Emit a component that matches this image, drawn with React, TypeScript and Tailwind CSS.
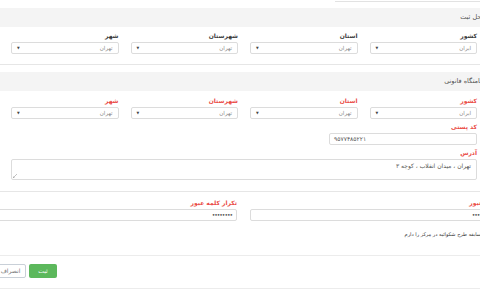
import React from 'react';

const font = { fontFamily: '"DejaVu Sans", Tahoma, sans-serif' };

function Label({ text, red }: { text: string; red?: boolean }) {
  return (
    <div
      className={`text-[6px] leading-[8px] font-bold mb-[2px] whitespace-nowrap ${
        red ? 'text-[#ea4a44]' : 'text-[#3a3a3a]'
      }`}
    >
      {text}
    </div>
  );
}

function SelectBox({ value }: { value: string }) {
  return (
    <div className="h-[12px] flex items-center justify-between border border-[#dcdcdc] rounded-[2px] bg-white px-[5px]">
      <span className="text-[5.5px] leading-[8px] text-[#888]">{value}</span>
      <span className="text-[3.5px] leading-[8px] text-[#444]">▼</span>
    </div>
  );
}

function Field({ label, value, red }: { label: string; value: string; red?: boolean }) {
  return (
    <div>
      <Label text={label} red={red} />
      <SelectBox value={value} />
    </div>
  );
}

function Header({ title }: { title: string }) {
  return (
    <div className="h-[19px] bg-[#f4f4f4] flex items-center pr-[5px]">
      <span className="text-[6.5px] leading-[9px] text-[#555] whitespace-nowrap">{title}</span>
    </div>
  );
}

export default function App() {
  return (
    <div dir="rtl" style={font} className="w-[480px] h-[300px] overflow-hidden bg-white">
      <div className="-mx-[10px]">
        <div className="h-[2px] flex">
          <div className="w-[155px] border-b border-[#e2e2e2]" />
        </div>

        <div className="mt-[6px]">
          <Header title="محل ثبت" />
        </div>

        <div className="grid grid-cols-4 gap-x-[12px] pr-[13px] pl-[21px] pt-[5px]">
          <Field label="کشور" value="ایران" />
          <Field label="استان" value="تهران" />
          <Field label="شهرستان" value="تهران" />
          <Field label="شهر" value="تهران" />
        </div>

        <div className="mt-[10px] border-b border-[#e6e6e6]" />

        <div className="mt-[7px]">
          <Header title="اقامتگاه قانونی" />
        </div>

        <div className="grid grid-cols-4 gap-x-[12px] pr-[13px] pl-[21px] pt-[6px]">
          <Field label="کشور" value="ایران" red />
          <Field label="استان" value="تهران" red />
          <Field label="شهرستان" value="تهران" red />
          <Field label="شهر" value="تهران" red />
        </div>

        <div className="pr-[13px] pl-[21px] mt-[4px]">
          <div className="w-[148px]">
            <Label text="کد پستی" red />
            <div
              dir="ltr"
              className="h-[12px] flex items-center border border-[#dcdcdc] rounded-[2px] px-[4px] text-[6px] leading-[8px] text-[#555]"
            >
              ۹۵۷۷۴۸۵۲۲۱
            </div>
          </div>

          <div className="mt-[4px]">
            <Label text="آدرس" red />
            <div className="relative h-[21px] border border-[#dcdcdc] rounded-[2px] px-[5px] pt-[2px] text-[6px] leading-[8px] text-[#555]">
              تهران ، میدان انقلاب ، کوچه ۳
              <svg className="absolute left-[1px] bottom-[1px]" width="4" height="4" viewBox="0 0 4 4">
                <path d="M0 4 L4 0 M0 4 L2 4 M0 4 L0 2" stroke="#999" strokeWidth="0.6" fill="none" />
              </svg>
            </div>
          </div>
        </div>

        <div className="mt-[11px] border-b border-[#e6e6e6]" />

        <div className="grid grid-cols-2 gap-x-[13px] -mr-[6px] pl-[1px] pt-[7px]">
          <div>
            <Label text="رمز عبور" red />
            <div className="h-[12px] flex items-center border border-[#dcdcdc] rounded-[2px] px-[3px] text-[6px] leading-[8px] text-[#555] tracking-[-1px]">
              ••••••••
            </div>
          </div>
          <div>
            <Label text="تکرار کلمه عبور" red />
            <div className="h-[12px] flex items-center border border-[#dcdcdc] rounded-[2px] px-[4px] text-[6px] leading-[8px] text-[#555] tracking-[-1px]">
              ••••••••
            </div>
          </div>
        </div>

        <div className="mt-[9px] pr-[9px] text-[5px] leading-[8px] text-[#333] whitespace-nowrap">
          سابقه طرح شکوائیه در مرکز را دارم
        </div>

        <div className="mt-[17px] border-b border-[#ececec]" />

        <div className="flex justify-end gap-[3px] pl-[5px] pt-[8px]">
          <button className="h-[14px] w-[28px] bg-[#5cb85c] rounded-[2px] text-white text-[6px] leading-[8px]">
            ثبت
          </button>
          <button className="h-[14px] w-[31px] bg-white border border-[#c9d0d8] rounded-[2px] text-[#777] text-[6px] leading-[8px]">
            انصراف
          </button>
        </div>

        <div className="mt-[10px] border-b border-[#ececec]" />
      </div>
    </div>
  );
}
